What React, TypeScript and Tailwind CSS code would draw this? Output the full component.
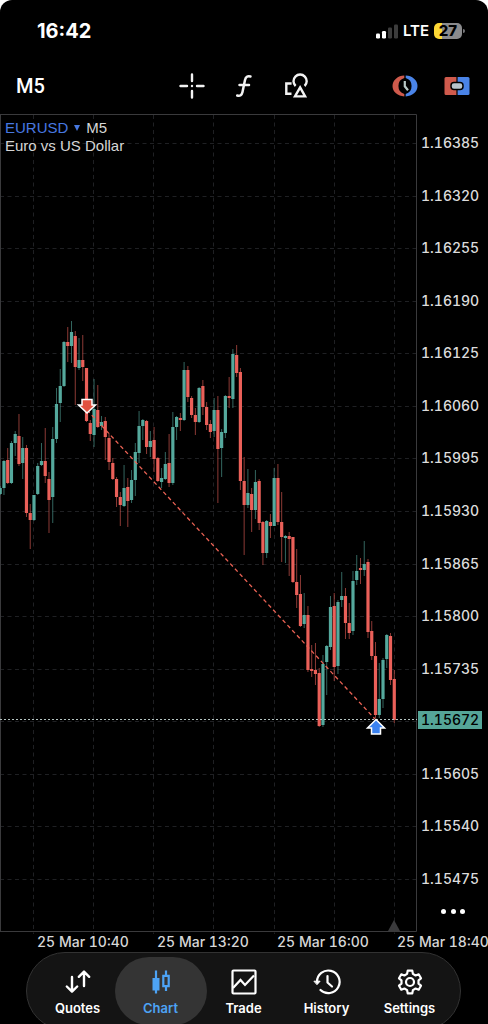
import React from "react";

type Candle = [open: "u" | "d", top: number, bottom: number, high: number, low: number];

const candles: Candle[] = [
  ["u", 488, 494, 486, 495], ["u", 461, 488, 460, 495], ["d", 460, 483, 448, 484], ["u", 443, 483, 441, 484],
  ["u", 434, 443, 431, 456], ["d", 436, 464, 414, 466], ["u", 448, 463, 437, 479], ["d", 448, 513, 445, 517],
  ["d", 513, 520, 504, 549], ["u", 495, 520, 495, 521], ["u", 466, 494, 463, 495], ["u", 461, 465, 443, 466],
  ["d", 461, 476, 428, 483], ["d", 479, 500, 472, 533], ["u", 439, 497, 427, 523], ["u", 404, 439, 388, 443],
  ["u", 386, 403, 369, 422], ["u", 342, 386, 341, 387], ["d", 342, 346, 327, 362], ["u", 332, 346, 321, 363],
  ["d", 336, 367, 331, 405], ["u", 360, 368, 338, 370], ["d", 360, 367, 335, 381], ["d", 368, 421, 368, 422],
  ["d", 423, 434, 420, 441], ["u", 409, 435, 379, 447], ["d", 410, 427, 385, 428], ["u", 422, 426, 416, 430],
  ["d", 421, 437, 417, 460], ["d", 438, 462, 433, 470], ["d", 463, 479, 458, 480], ["d", 479, 497, 477, 507],
  ["d", 497, 505, 492, 526], ["u", 488, 506, 465, 507], ["d", 487, 501, 478, 527], ["u", 480, 500, 470, 503],
  ["u", 452, 480, 443, 496], ["u", 426, 453, 411, 463], ["u", 420, 426, 419, 440], ["d", 421, 447, 420, 454],
  ["u", 441, 447, 431, 457], ["d", 440, 459, 427, 472], ["d", 458, 481, 457, 482], ["u", 478, 482, 468, 488],
  ["u", 464, 479, 452, 480], ["d", 463, 483, 434, 487], ["u", 427, 483, 412, 485], ["u", 417, 427, 416, 440],
  ["d", 418, 420, 413, 431], ["u", 370, 420, 362, 421], ["d", 370, 397, 366, 402], ["d", 398, 415, 396, 418],
  ["d", 415, 422, 408, 435], ["u", 388, 422, 387, 423], ["d", 386, 407, 380, 415], ["d", 407, 425, 402, 430],
  ["d", 424, 432, 420, 438], ["u", 410, 431, 398, 437], ["d", 410, 449, 396, 503], ["u", 432, 448, 429, 477],
  ["u", 396, 433, 395, 438], ["d", 396, 398, 377, 408], ["u", 354, 399, 349, 408], ["d", 355, 373, 345, 377],
  ["d", 372, 481, 368, 490], ["d", 481, 505, 457, 555], ["u", 493, 505, 469, 508], ["d", 494, 510, 488, 532],
  ["u", 482, 510, 470, 519], ["d", 481, 523, 479, 530], ["d", 522, 553, 521, 565], ["u", 521, 553, 520, 558],
  ["d", 522, 526, 514, 538], ["u", 478, 526, 468, 526], ["d", 478, 522, 464, 525], ["d", 522, 537, 492, 562],
  ["u", 536, 538, 535, 563], ["d", 536, 539, 532, 576], ["d", 537, 582, 537, 583], ["d", 582, 595, 549, 608],
  ["d", 594, 626, 575, 627], ["u", 615, 624, 593, 628], ["d", 615, 670, 606, 672], ["d", 669, 671, 645, 677],
  ["d", 670, 674, 643, 685], ["d", 673, 726, 668, 727], ["u", 664, 725, 655, 727], ["u", 646, 662, 645, 695],
  ["u", 607, 647, 596, 650], ["d", 606, 667, 593, 681], ["u", 602, 666, 600, 674], ["u", 596, 600, 572, 607],
  ["d", 596, 623, 588, 639], ["d", 623, 633, 603, 639], ["u", 581, 631, 571, 635], ["u", 571, 580, 555, 585],
  ["d", 568, 570, 558, 584], ["u", 564, 570, 541, 576], ["d", 562, 632, 559, 638], ["d", 631, 656, 621, 660],
  ["d", 656, 715, 642, 718], ["u", 699, 715, 663, 718], ["u", 660, 699, 658, 708], ["u", 635, 659, 634, 668],
  ["d", 636, 680, 633, 685], ["d", 679, 720, 670, 723],
];

const TOP = 114;
const STEP = 3.753;
const columns = [33.5, 93.5, 153.5, 213.5, 274.5, 334.5, 394.5];
const prices = [
  "1.16385", "1.16320", "1.16255", "1.16190", "1.16125", "1.16060", "1.15995", "1.15930",
  "1.15865", "1.15800", "1.15735", "", "1.15605", "1.15540", "1.15475",
];
const times = ["25 Mar 10:40", "25 Mar 13:20", "25 Mar 16:00", "25 Mar 18:40"];

function StatusBar() {
  return (
    <div className="flex h-[62px] items-center justify-between pr-[23px] pl-[37px]">
      <span className="text-[20px] font-bold">16:42</span>
      <div className="flex items-center gap-[5px]">
        <svg width="22" height="15" viewBox="0 0 22 15" aria-hidden="true">
          <rect x="0" y="9.5" width="4" height="5" rx="1.2" fill="#fff" />
          <rect x="6" y="7" width="4" height="7.5" rx="1.2" fill="#fff" />
          <rect x="12" y="3.5" width="4" height="11" rx="1.2" fill="#3c3c3c" />
          <rect x="18" y="0.5" width="4" height="14" rx="1.2" fill="#3c3c3c" />
        </svg>
        <span className="text-[15px] font-semibold">LTE</span>
        <div className="flex items-center gap-px">
          <span className="flex h-4 w-7 items-center justify-center rounded-[5px] bg-linear-to-r from-[#fdd835] from-27% to-[#8b8b8d] to-27% text-[15px] font-extrabold text-black">
            27
          </span>
          <span className="h-1 w-0.5 rounded-r-full bg-[#77777a]" />
        </div>
      </div>
    </div>
  );
}

function Toolbar() {
  const button = "flex h-12 w-[52px] items-center justify-center";
  return (
    <div className="mb-1 grid h-12 grid-cols-[1fr_auto_1fr] items-center px-[5px]">
      <button className="justify-self-start pl-[11px] font-[Roboto] text-[20px] font-medium">M5</button>
      <div className="flex">
        <button className={button} aria-label="Crosshair">
          <svg width="26" height="26" viewBox="0 0 26 26" stroke="#f2f2f2" strokeWidth="2.4" strokeLinecap="round">
            <path d="M13 1.5V8M13 18v6.500M1.500 13H8M18 13h6.500" />
            <circle cx="13" cy="13" r="1.200" fill="#f2f2f2" stroke="none" />
          </svg>
        </button>
        <button className={button} aria-label="Indicators">
          <svg width="20" height="26" viewBox="0 0 20 26" fill="none" stroke="#f2f2f2" strokeWidth="2.500" strokeLinecap="round">
            <path d="M16.500 3.500c-3-.9-4.800.4-5.500 3.500L8.500 19c-.7 3.100-2.400 4.300-5.300 3.500M5.500 12h9.500" />
          </svg>
        </button>
        <button className={button} aria-label="Objects">
          <svg width="26" height="26" viewBox="0 0 26 26" fill="none" stroke="#f2f2f2" strokeWidth="2.400">
            <path d="M8.600 10.500H3.300v10.200h5.200" />
            <path d="M12.600 13A6.600 6.600 0 1 1 21.600 13" />
            <path d="M17.100 14.400l5 9H12z" />
          </svg>
        </button>
      </div>
      <div className="flex justify-self-end">
        <button className={button} aria-label="Trade sessions">
          <svg width="26" height="22" viewBox="0 0 26 22">
            <path d="M12.300 .6A11.800 10.400 0 0 0 12.300 21.400V19A8 8.300 0 0 1 12.300 3z" fill="#cf5a4c" />
            <path d="M13.700 .6A11.800 10.400 0 0 1 13.700 21.400V19A8 8.300 0 0 0 13.700 3z" fill="#4a84e8" />
            <path d="M12.800 6v5.300l3.200 4" fill="none" stroke="#b9c8c6" strokeWidth="2.200" />
          </svg>
        </button>
        <button className={button} aria-label="One-click trading">
          <svg width="26" height="20" viewBox="0 0 26 20">
            <path d="M2 1h10.400v18H2a1.500 1.500 0 0 1-1.500-1.500v-15A1.500 1.500 0 0 1 2 1z" fill="#cf5a4c" />
            <path d="M13.600 1H24a1.500 1.500 0 0 1 1.500 1.500v15A1.500 1.500 0 0 1 24 19H13.600z" fill="#4a84e8" />
            <rect x="7" y="6.500" width="12" height="7" rx="3" fill="#b9c4cc" stroke="#000" strokeWidth="1.500" />
          </svg>
        </button>
      </div>
    </div>
  );
}

function CandleChart() {
  return (
    <svg className="block w-full overflow-visible" viewBox="0 0 417 817" role="img" aria-label="EURUSD M5 candlestick chart">
      <g stroke="#1f2023" strokeWidth="1" strokeDasharray="4 3.500">
        {columns.map((x) => (
          <path key={x} d={`M${x} 1V820`} />
        ))}
        {prices.map((p, i) => (
          <path key={i} d={`M0 ${Math.round(29 + i * 52.57) + 0.5}H420`} />
        ))}
      </g>
      <path d="M0 .5H416.500V817.500H0M.5 0V817" fill="none" stroke="#3a3a3c" />
      <path d="M388 817l6-11 6 11z" fill="#3a3a3c" />
      {candles.map(([dir, top, bottom, high, low], i) => {
        const x = 0.2 + i * STEP;
        return (
          <g key={i} fill={dir === "u" ? "#55a99d" : "#ea6059"}>
            <rect x={x - 0.5} y={high - TOP} width="1" height={low - high} opacity="0.6" />
            <rect x={x - 1.6} y={top - TOP} width="3.200" height={bottom - top} />
          </g>
        );
      })}
      <path d="M87 296L375 605" stroke="#ea6254" strokeWidth="1.300" strokeDasharray="4 3" />
      <path d="M0 605.500H417" stroke="#b5c4c1" strokeWidth="1.200" strokeDasharray="2 2" />
      <path d="M82 285.500h10v5.500h3.500L87 299 78.500 291H82z" fill="#e2513f" stroke="#fff" strokeWidth="1.500" />
      <path d="M376 605.500l8.500 8.500h-4v6h-9v-6h-4z" fill="#3b82f0" stroke="#fff" strokeWidth="1.500" />
    </svg>
  );
}

function PriceAxis() {
  return (
    <div className="relative flex w-[71px] shrink-0 flex-col text-[14px] font-medium text-[#dcdcdc] tabular-nums">
      <div className="flex h-[773px] flex-col justify-between pt-[21px] pl-1">
        {prices.map((p, i) => (
          <span key={i} className="h-4 leading-4">
            {p}
          </span>
        ))}
      </div>
      <span className="absolute top-[597px] left-px h-[18px] bg-[#55a598] px-[3px] leading-[18px] text-black">
        1.15672
      </span>
      <button className="mt-3 ml-6 flex h-6 w-6 items-center justify-between" aria-label="More">
        <span className="size-[5px] rounded-full bg-white" />
        <span className="size-[5px] rounded-full bg-white" />
        <span className="size-[5px] rounded-full bg-white" />
      </button>
    </div>
  );
}

const iconProps = {
  width: 28,
  height: 28,
  viewBox: "0 0 28 28",
  fill: "none",
  stroke: "currentColor",
  strokeWidth: 2.2,
  strokeLinecap: "round" as const,
  strokeLinejoin: "round" as const,
};

const gear = (() => {
  const points: string[] = [];
  for (let i = 0; i < 6; i++) {
    const base = (i * 60 - 90) * (Math.PI / 180);
    for (const [offset, r] of [[-0.34, 8.6], [-0.2, 11.6], [0.2, 11.6], [0.34, 8.6]]) {
      points.push(`${(14 + r * Math.cos(base + offset)).toFixed(1)} ${(14 + r * Math.sin(base + offset)).toFixed(1)}`);
    }
  }
  return `M${points.join("L")}Z`;
})();

const tabs = [
  {
    label: "Quotes",
    icon: (
      <svg {...iconProps} strokeWidth={2.400}>
        <path d="M8 9v14.500M2.800 18.500L8 23.700l5.200-5.200M20 18V3.700M14.800 8.800L20 3.600l5.200 5.200" />
      </svg>
    ),
  },
  {
    label: "Chart",
    icon: (
      <svg {...iconProps} strokeLinejoin="miter" strokeLinecap="butt">
        <path d="M9 2.500v23M19 2.500v5M19 18v5" />
        <path d="M5.500 10h7v12.500h-7z" fill="currentColor" stroke="none" />
        <path d="M16.300 7.800h5.400v10.400h-5.400z" />
      </svg>
    ),
  },
  {
    label: "Trade",
    icon: (
      <svg {...iconProps} strokeLinecap="butt" strokeLinejoin="miter">
        <rect x="2.500" y="2.500" width="23" height="23" rx="1" />
        <path d="M3 20l7.500-8 4.500 5L24 7.500" />
      </svg>
    ),
  },
  {
    label: "History",
    icon: (
      <svg {...iconProps}>
        <path d="M4 14A11.300 11.300 0 1 1 7.500 22" />
        <path d="M1.300 13.200h5.800L4.200 16.400z" fill="currentColor" strokeWidth="1" />
        <path d="M14.500 8v6.500l4.500 4" />
      </svg>
    ),
  },
  {
    label: "Settings",
    icon: (
      <svg {...iconProps}>
        <path d={gear} />
        <circle cx="14" cy="14" r="4" />
      </svg>
    ),
  },
];

function TabBar() {
  return (
    <nav className="mr-[27px] ml-[26px] -mb-1.5 flex h-[78px] items-center rounded-full border border-[#323232] bg-[#141414] px-[9px]">
      {tabs.map((tab) => {
        const active = tab.label === "Chart";
        return (
          <div key={tab.label} className="flex flex-1 basis-0 justify-center">
            <button
              aria-current={active ? "page" : undefined}
              className={
                "-mx-[5px] flex h-[68px] w-[92px] shrink-0 flex-col items-center gap-1 rounded-full pt-[11px] text-[13px] leading-4 font-semibold " +
                (active ? "bg-[#343434] text-[#4da3f5]" : "text-white")
              }
            >
              {tab.icon}
              {tab.label}
            </button>
          </div>
        );
      })}
    </nav>
  );
}

export default function App() {
  return (
    <div className="min-h-screen overflow-hidden rounded-t-xl bg-black font-[Inter,sans-serif] text-white">
      <StatusBar />
      <Toolbar />
      <main className="flex items-start">
        <div className="relative min-w-0 flex-1">
          <CandleChart />
          <div className="absolute top-[5px] left-[5px] font-['Liberation_Sans',sans-serif] text-[15px] leading-[18px] text-[#d6d6d6]">
            <button className="flex items-center gap-1.5">
              <span className="text-[#4778e0]">EURUSD</span>
              <svg width="6" height="6" viewBox="0 0 6 6" fill="#4778e0" aria-hidden="true">
                <path d="M0 0h6L3 6z" />
              </svg>
              <span>M5</span>
            </button>
            <p>Euro vs US Dollar</p>
          </div>
        </div>
        <PriceAxis />
      </main>
      <div className="flex h-[21px] overflow-hidden pl-[37px] text-[14px] leading-[21px] font-medium whitespace-nowrap text-[#d6d6d6] tabular-nums">
        {times.map((t) => (
          <span key={t} className="w-[120px] shrink-0">
            {t}
          </span>
        ))}
      </div>
      <TabBar />
    </div>
  );
}
